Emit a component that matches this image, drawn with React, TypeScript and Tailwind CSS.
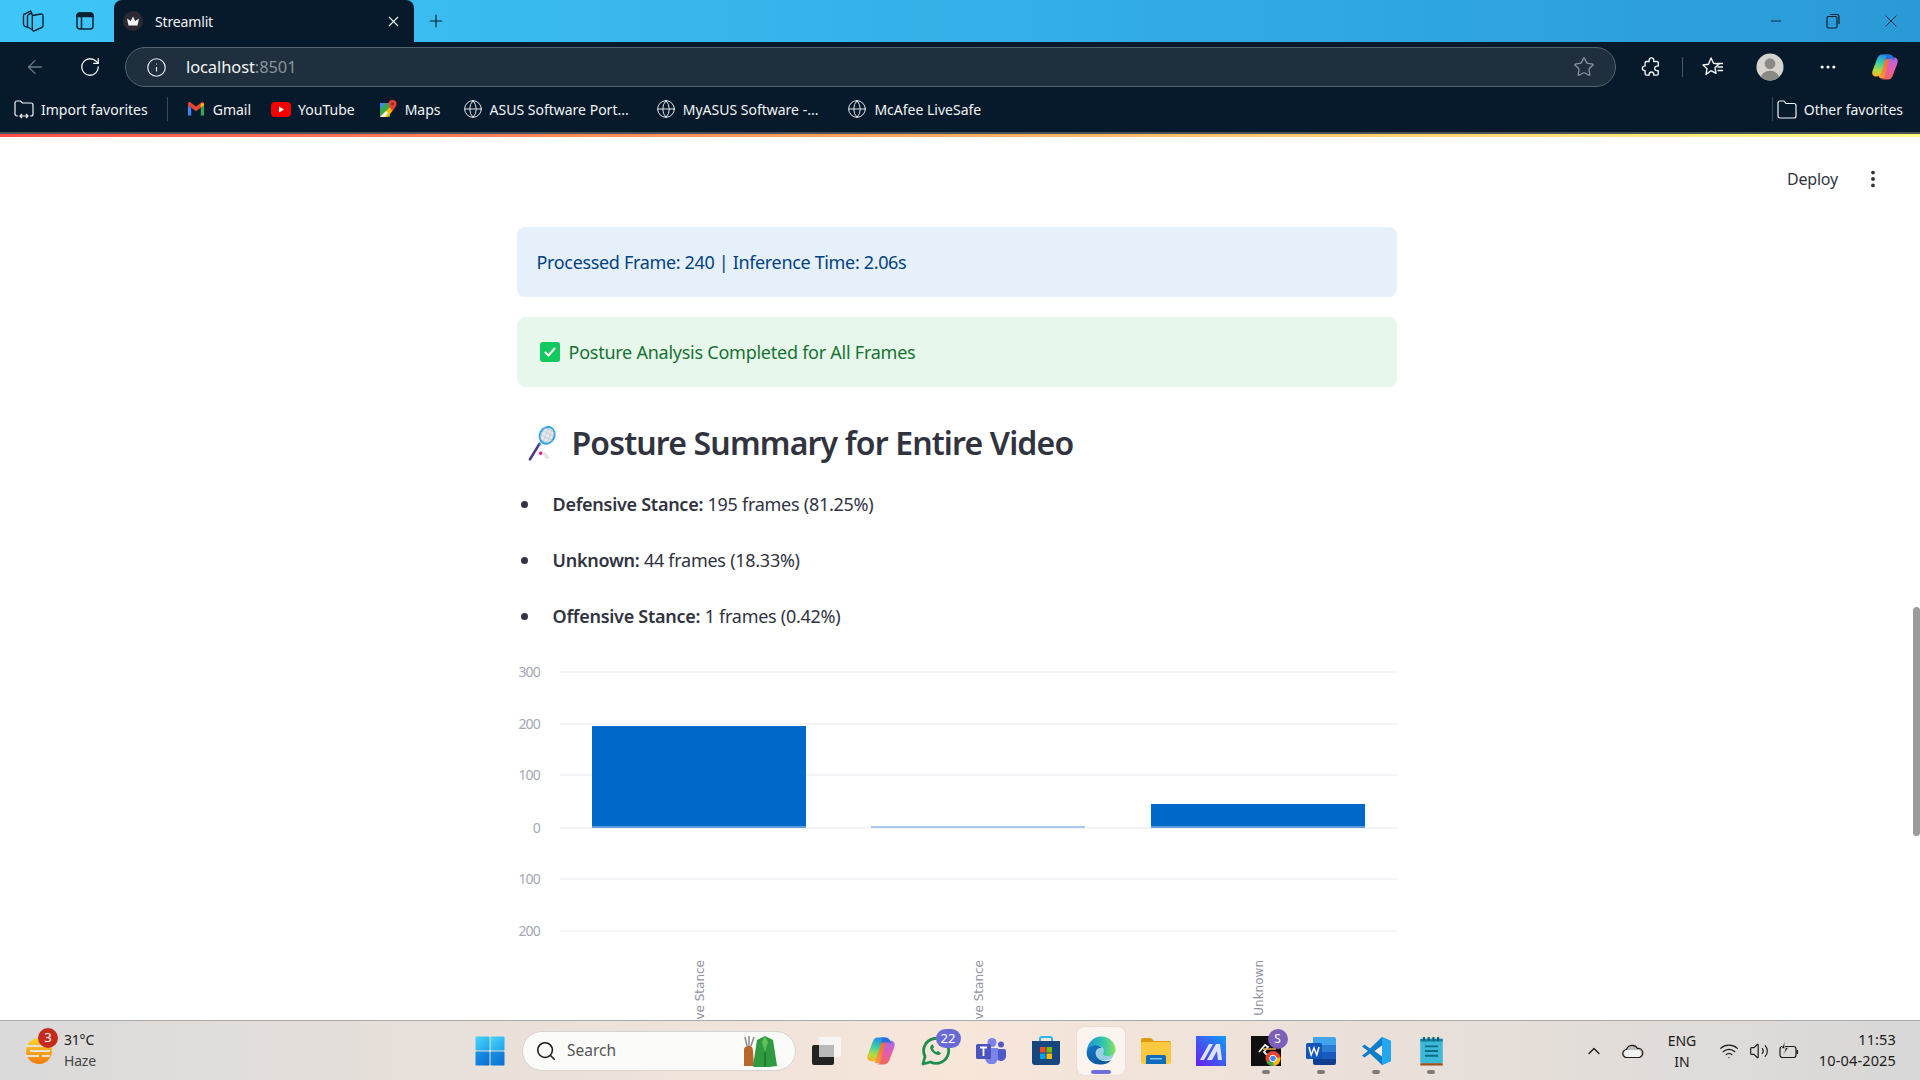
import {
  ArrowLeft,
  ChevronUp,
  Globe,
  Info,
  Minus,
  MoreHorizontal,
  MoreVertical,
  Plus,
  RotateCw,
  Search,
  Star,
  Volume2,
  Wifi,
  X,
} from 'lucide-react'
import type { ReactNode } from 'react'

const SANS = "font-['Noto_Sans',sans-serif]"

function WorkspacesIcon() {
  return (
    <svg width="22" height="22" viewBox="0 0 22 22" fill="none" stroke="#0b2233" strokeWidth="1.4" strokeLinejoin="round">
      <path d="M10.500 5.500 19 4a1.800 1.800 0 0 1 2 1.800v10a1.800 1.800 0 0 1-1.300 1.700l-7.500 3.300a1.300 1.300 0 0 1-1.900-1.200V7.300a1.800 1.800 0 0 1 .7-1.800Z" />
      <path d="M10.500 5.500 9.500 3 6.500 4.500A2 2 0 0 0 5.500 6.300v9.500a2 2 0 0 0 1 1.700l3.500 2" />
      <path d="M9.800 2.800 8.500 1 3 3.800A2 2 0 0 0 1.500 5.800v8.500a2 2 0 0 0 1 1.700l3 1.700" />
    </svg>
  )
}

function VerticalTabsIcon() {
  return (
    <svg width="18" height="18" viewBox="0 0 18 18" fill="none" stroke="#0b2233" strokeWidth="1.500">
      <rect x="1" y="1" width="16" height="16" rx="3" />
      <path d="M1 4.500h16V4a3 3 0 0 0-3-3H4a3 3 0 0 0-3 3Z" fill="#0b2233" />
      <path d="M5.500 4.500V17" />
    </svg>
  )
}

function StreamlitFavicon() {
  return (
    <span className="flex h-5 w-5 items-center justify-center rounded-full bg-[#2b2a33]">
      <svg width="14" height="12" viewBox="0 0 14 12" fill="#f4f4f4">
        <path d="M7 1.500 9.200 6 13 3.500 11.500 10.500H2.500L1 3.500 4.800 6Z" />
      </svg>
    </span>
  )
}

function GmailIcon() {
  return (
    <svg width="18" height="16" viewBox="0 0 18 16" fill="none">
      <path d="M1 4v10.500h3.200V7Z" fill="#4285f4" />
      <path d="M17 4v10.500h-3.200V7Z" fill="#34a853" />
      <path d="M1 4.200 9 10.200l8-6V2.600c0-1.400-1.500-2-2.600-1.200L9 5.500 3.600 1.400C2.500.6 1 1.200 1 2.600Z" fill="#ea4335" />
      <path d="M13.800 2.500 17 2.600v1.600l-3.200 2.600Z" fill="#fbbc04" />
    </svg>
  )
}

function YoutubeIcon() {
  return (
    <svg width="20" height="15" viewBox="0 0 20 15">
      <rect width="20" height="15" rx="4" fill="#f40000" />
      <path d="M8 4.500 13 7.500 8 10.500Z" fill="#fff" />
    </svg>
  )
}

function MapsIcon() {
  return (
    <svg width="18" height="18" viewBox="0 0 18 18">
      <path d="M1 3h10v14H1Z" fill="#35a853" />
      <path d="M1 17 11 7l3 3-5 7Z" fill="#fbbc04" />
      <path d="M1 3h6L1 9Z" fill="#4285f4" />
      <path d="M1 17l6-6 2 2-3 4Z" fill="#f8f3e6" />
      <path d="M13.500 0a4 4 0 0 1 4 4c0 2.600-2.500 4.400-4 7.500C12 8.400 9.500 6.600 9.500 4a4 4 0 0 1 4-4Z" fill="#ea4335" />
      <circle cx="13.500" cy="4" r="1.400" fill="#8f2018" />
    </svg>
  )
}

function FolderImportIcon() {
  return (
    <svg width="20" height="20" viewBox="0 0 20 20" fill="none" stroke="#f2f4f6" strokeWidth="1.200">
      <path d="M4 17H3a2 2 0 0 1-2-2V4a2 2 0 0 1 2-2h3.500l2 2H17a2 2 0 0 1 2 2v9a2 2 0 0 1-2 2h-1" />
      <path d="M6 17h8M8 15l-2 2 2 2M12 15l2 2-2 2" />
    </svg>
  )
}

function FolderIcon() {
  return (
    <svg width="20" height="20" viewBox="0 0 20 20" fill="none" stroke="#f2f4f6" strokeWidth="1.200">
      <path d="M1 4a2 2 0 0 1 2-2h4l2 2.500h8a2 2 0 0 1 2 2V17a2 2 0 0 1-2 2H3a2 2 0 0 1-2-2Z" />
    </svg>
  )
}

function PuzzleIcon() {
  return (
    <svg width="20" height="22" viewBox="0 0 22 24" fill="none" stroke="#f2f4f6" strokeWidth="1.500" strokeLinejoin="round">
      <path d="M9 4.500a2.500 2.500 0 0 1 5 0V6h3.500A1.500 1.500 0 0 1 19 7.500V11h-1.500a2.500 2.500 0 0 0 0 5H19v3.500a1.500 1.500 0 0 1-1.500 1.500H14v-1a2.500 2.500 0 0 0-5 0v1H6a1.500 1.500 0 0 1-1.500-1.500V16H4a2.500 2.500 0 0 1 0-5h.5V7.500A1.500 1.500 0 0 1 6 6h3Z" />
    </svg>
  )
}

function FavoritesIcon() {
  return (
    <svg width="24" height="24" viewBox="0 0 24 24" fill="none" stroke="#f2f4f6" strokeWidth="1.400" strokeLinejoin="round">
      <path d="M10 3 12.500 8.300l5.500.7-4 3.800 1 5.600L10 15.700 5 19.400l1-5.600L2 10l5.500-.8Z" />
      <path d="M16 8.500h6M16.500 12h5.500M16.500 15.500h5.500" />
    </svg>
  )
}

function AvatarIcon() {
  return (
    <svg width="28" height="28" viewBox="0 0 30 30">
      <clipPath id="avatar-clip">
        <circle cx="15" cy="15" r="14.500" />
      </clipPath>
      <circle cx="15" cy="15" r="14.500" fill="#d6d3cf" />
      <g clipPath="url(#avatar-clip)" fill="#8b8985">
        <circle cx="15" cy="11.500" r="5.800" />
        <ellipse cx="15" cy="27" rx="10" ry="8" />
      </g>
    </svg>
  )
}

function CopilotIcon({ id, size = 28 }: { id: string; size?: number }) {
  return (
    <svg width={size} height={size} viewBox="0 0 28 28">
      <defs>
        <linearGradient id={`${id}-a`} x1="0.500" y1="0" x2="0.300" y2="1">
          <stop offset="0" stopColor="#1f8fe8" />
          <stop offset="0.400" stopColor="#3fd0a0" />
          <stop offset="0.750" stopColor="#b5dc3c" />
          <stop offset="1" stopColor="#f8b22a" />
        </linearGradient>
        <linearGradient id={`${id}-b`} x1="0.500" y1="0" x2="0.700" y2="1">
          <stop offset="0" stopColor="#f26a4f" />
          <stop offset="0.450" stopColor="#e55ab5" />
          <stop offset="1" stopColor="#9a6bec" />
        </linearGradient>
        <linearGradient id={`${id}-c`} x1="0" y1="1" x2="1" y2="0">
          <stop offset="0" stopColor="#f9a13a" />
          <stop offset="1" stopColor="#f0503f" />
        </linearGradient>
      </defs>
      <path d="M20 3.500h-6L8 22c-.5 2 .5 3.500 2.500 3.500H17c2 0 3-1 3.700-3L24 13Z" fill={`url(#${id}-c)`} />
      <g transform="rotate(180 14 14)">
        <path d="M11 1.500h7c-2 0-3 1.200-3.800 3.500L10 20c-.8 2.200-2 3.500-4 3.500H5C2 23.500.5 21 1.500 18L6 6C7 3 8.500 1.500 11 1.500Z" fill={`url(#${id}-b)`} />
      </g>
      <path d="M11 1.500h8c-2 0-3.500 1.200-4.300 3.500L10 20c-.8 2.200-2 3.500-4 3.500H5C2 23.500.5 21 1.500 18L6 6C7 3 8.500 1.500 11 1.500Z" fill={`url(#${id}-a)`} />
      <path d="M13 1.500h5c2.500 0 4 1.300 4.800 3.500l1 3c-1-1.500-2.500-2-4-2h-3.500c-2 0-3 1-3.800 3L15 4.500c.5-1.500-.5-3-2-3Z" fill="#2a6fe0" />
    </svg>
  )
}

function RacketEmoji() {
  return (
    <svg width="30" height="36" viewBox="0 0 34 42">
      <path d="M3 40 14 22" stroke="#4b3b8f" strokeWidth="3" strokeLinecap="round" />
      <ellipse cx="23" cy="12" rx="8.500" ry="10" transform="rotate(28 23 12)" fill="#e6e9ee" stroke="#1ea0e6" strokeWidth="2.200" />
      <path d="M15 11 30 19M17 6 32 14M19 2 32 9M14 16 27 22M20 3 14 17M25 3 18 20M29 5 23 21M32 9 27 20" stroke="#b8bcc4" strokeWidth="0.700" />
      <path d="M14 22 16 23" stroke="#1ea0e6" strokeWidth="2.200" />
      <circle cx="15.500" cy="33" r="2" fill="#f0148c" />
      <path d="M17 33 21 32 26 38 22 40Z" fill="#e4e4e8" />
    </svg>
  )
}

function BadgeCheck() {
  return (
    <span className="flex h-5 w-5 items-center justify-center rounded-[3px] bg-[#12c95f]">
      <svg width="14" height="14" viewBox="0 0 14 14" fill="none" stroke="#fff" strokeWidth="2" strokeLinecap="round" strokeLinejoin="round">
        <path d="M2.500 7.500 5.500 10.500 11.500 3.500" />
      </svg>
    </span>
  )
}

function Bookmark({ icon, label, className }: { icon: ReactNode; label: string; className: string }) {
  return (
    <div className={`flex items-center ${className}`}>
      <span className="flex w-5 justify-center">{icon}</span>
      <span className="ml-[7px] whitespace-nowrap text-[14px] text-[#f2f4f6]">{label}</span>
    </div>
  )
}

function BrowserChrome() {
  return (
    <div className={`shrink-0 bg-[#071a2b] ${SANS}`}>
      <div className="flex h-[42px] items-center bg-gradient-to-r from-[#3fc6f8] to-[#2a9ad7]">
        <div className="flex w-[62px] justify-center pl-[4px]">
          <WorkspacesIcon />
        </div>
        <div className="flex w-[44px] justify-center pl-[2px]">
          <VerticalTabsIcon />
        </div>
        <div className="ml-[8px] flex h-[42px] w-[300px] items-center rounded-t-lg bg-[#071a2b] pl-[9px] pr-[12px]">
          <StreamlitFavicon />
          <span className="ml-[12px] flex-1 text-[14px] tracking-[-0.15px] text-[#f2f4f6]">Streamlit</span>
          <X size={17} color="#f2f4f6" strokeWidth={1.6} />
        </div>
        <div className="ml-[12px] flex w-[20px] justify-center">
          <Plus size={24} color="#0b2233" strokeWidth={1.4} />
        </div>
        <div className="ml-auto flex items-center">
          <div className="flex w-[58px] justify-center pl-[2px]">
            <Minus size={16} color="#0b2233" strokeWidth={1.4} />
          </div>
          <div className="flex w-[58px] justify-center">
            <svg width="14" height="16" viewBox="0 0 14 16" fill="none" stroke="#0b2233" strokeWidth="1.200">
              <rect x="1" y="3.500" width="10" height="11.500" rx="1.500" />
              <path d="M4 1.500h7a2 2 0 0 1 2 2V11" />
            </svg>
          </div>
          <div className="flex w-[58px] justify-center pr-[1px]">
            <X size={20} color="#0b2233" strokeWidth={1.100} />
          </div>
        </div>
      </div>

      <div className="flex h-[50px] items-center">
        <div className="flex w-[70px] justify-center">
          <ArrowLeft size={22} color="#6d7a85" strokeWidth={1.400} />
        </div>
        <div className="flex w-[40px] justify-center">
          <RotateCw size={22} color="#f2f4f6" strokeWidth={1.400} />
        </div>
        <div className="ml-[15px] flex h-[40px] w-[1491px] items-center rounded-full border border-[#56636e] bg-[#1f2f3d] pl-[20px] pr-[20px]">
          <Info size={21} color="#f2f4f6" strokeWidth={1.300} />
          <span className="ml-[19px] flex-1 text-[16.500px] tracking-[-0.1px] text-[#f2f4f6]">
            localhost<span className="text-[#8a949c]">:8501</span>
          </span>
          <Star size={22} color="#8a949c" strokeWidth={1.400} />
        </div>
        <div className="ml-[15px] flex w-[40px] justify-center">
          <PuzzleIcon />
        </div>
        <div className="ml-[11px] h-[20px] w-px bg-[#4a5863]" />
        <div className="ml-[18px] flex w-[24px] justify-center">
          <FavoritesIcon />
        </div>
        <div className="ml-[31px]">
          <AvatarIcon />
        </div>
        <div className="ml-[34px]">
          <MoreHorizontal size={20} color="#f2f4f6" strokeWidth={1.800} />
        </div>
        <div className="ml-[33px]">
          <CopilotIcon id="copilot-top" />
        </div>
      </div>

      <div className="flex h-[40px] items-center pb-[6px]">
        <Bookmark className="ml-[14px]" icon={<FolderImportIcon />} label="Import favorites" />
        <div className="ml-[19px] h-[24px] w-px bg-[#3b4a55]" />
        <Bookmark className="ml-[18px]" icon={<GmailIcon />} label="Gmail" />
        <Bookmark className="ml-[20px]" icon={<YoutubeIcon />} label="YouTube" />
        <Bookmark className="ml-[23px]" icon={<MapsIcon />} label="Maps" />
        <Bookmark className="ml-[22px]" icon={<Globe size={20} color="#f2f4f6" strokeWidth={1.100} />} label="ASUS Software Port..." />
        <Bookmark className="ml-[27px]" icon={<Globe size={20} color="#f2f4f6" strokeWidth={1.100} />} label="MyASUS Software -..." />
        <Bookmark className="ml-[29px]" icon={<Globe size={20} color="#f2f4f6" strokeWidth={1.100} />} label="McAfee LiveSafe" />
        <div className="ml-auto h-[24px] w-px bg-[#3b4a55]" />
        <Bookmark className="ml-[1px] mr-[17px] pl-[3px]" icon={<FolderIcon />} label="Other favorites" />
      </div>
      <div className="h-[2px] bg-[#4a525a]" />
      <div className="h-[3px] bg-gradient-to-r from-[#ff4b4b] to-[#fffd80]" />
    </div>
  )
}

const yTicks = [
  { label: '300', y: 672 },
  { label: '200', y: 724 },
  { label: '100', y: 775 },
  { label: '0', y: 828 },
  { label: '100', y: 879 },
  { label: '200', y: 931 },
]

const bars = [
  { x: 592, width: 214, top: 726, fill: '#0068c9', label: 'Defensive Stance' },
  { x: 871, width: 214, top: 826, fill: '#a8c9ef', label: 'Offensive Stance' },
  { x: 1151, width: 214, top: 804, fill: '#0068c9', label: 'Unknown' },
]

function PostureChart() {
  return (
    <svg width="883" height="360" viewBox="517 660 883 360" className="mt-[16px] block shrink-0">
      {yTicks.map((t) => (
        <g key={t.y}>
          <line x1="560" x2="1397" y1={t.y} y2={t.y} stroke="#eef0f4" strokeWidth="1.500" />
          <text
            x="540"
            y={t.y + 5}
            textAnchor="end"
            fontFamily="'Noto Sans', sans-serif"
            fontSize="14"
            letterSpacing="-0.8"
            fill="#a3a8b4"
          >
            {t.label}
          </text>
        </g>
      ))}
      {bars.map((b) => (
        <g key={b.x}>
          <rect x={b.x} y={b.top} width={b.width} height={828 - b.top} fill={b.fill} />
          {b.fill === '#0068c9' && <rect x={b.x} y={826} width={b.width} height={2} fill="#5a9be0" />}
          <text
            transform={`translate(${b.x + 112} 960) rotate(-90)`}
            textAnchor="end"
            fontFamily="'DejaVu Sans', sans-serif"
            fontSize="12"
            fill="#8f93a0"
          >
            {b.label}
          </text>
        </g>
      ))}
    </svg>
  )
}

function ListRow({ name, value }: { name: string; value: string }) {
  return (
    <li className="flex h-[56px] items-center">
      <span className="ml-[4px] h-[7px] w-[7px] rounded-full bg-[#31333f]" />
      <span className="ml-[25px] text-[18px] tracking-[-0.27px] text-[#31333f]">
        <span className="font-semibold">{name}:</span> {value}
      </span>
    </li>
  )
}

function PageContent() {
  return (
    <main className={`relative flex min-h-0 flex-1 flex-col overflow-hidden bg-white pr-[7px] ${SANS}`}>
      <div className="flex h-[84px] shrink-0 items-center justify-end pr-[29px]">
        <span className="text-[16px] tracking-[-0.2px] text-[#31333f]">Deploy</span>
        <MoreVertical size={22} color="#31333f" strokeWidth={2.200} className="ml-[24px]" />
      </div>
      <div className="mx-auto mt-[6px] w-[880px] shrink-0">
        <div className="flex h-[70px] items-center rounded-lg bg-[#e6f0fb] pl-[20px] text-[18px] tracking-[-0.34px] text-[#004280]">
          Processed Frame: 240 | Inference Time: 2.06s
        </div>
        <div className="mt-[20px] flex h-[70px] items-center rounded-lg bg-[#e7f7ec] pl-[23px] text-[18px] tracking-[-0.25px] text-[#177233]">
          <BadgeCheck />
          <span className="ml-[9px]">Posture Analysis Completed for All Frames</span>
        </div>
        <h2 className="mt-[24px] flex h-[64px] items-center text-[32px] font-semibold tracking-[-0.85px] text-[#31333f]">
          <span className="ml-[10px] flex w-[45px]">
            <RacketEmoji />
          </span>
          Posture Summary for Entire Video
        </h2>
        <ul className="mt-[1px]">
          <ListRow name="Defensive Stance" value="195 frames (81.25%)" />
          <ListRow name="Unknown" value="44 frames (18.33%)" />
          <ListRow name="Offensive Stance" value="1 frames (0.42%)" />
        </ul>
        <PostureChart />
      </div>
      <div className="absolute right-0 top-[470px] h-[229px] w-[7px] rounded-full bg-[#9b9b9b]" />
    </main>
  )
}

function WindowsLogo() {
  return (
    <svg width="30" height="30" viewBox="0 0 30 30">
      <defs>
        <linearGradient id="win-top" x1="0" y1="0" x2="1" y2="1">
          <stop offset="0" stopColor="#4fd4fb" />
          <stop offset="1" stopColor="#1aa3ea" />
        </linearGradient>
        <linearGradient id="win-bottom" x1="0" y1="0" x2="1" y2="1">
          <stop offset="0" stopColor="#1b93e6" />
          <stop offset="1" stopColor="#0a6fcf" />
        </linearGradient>
      </defs>
      <rect x="0.500" y="0.500" width="14" height="14" rx="1" fill="url(#win-top)" />
      <rect x="15.500" y="0.500" width="14" height="14" rx="1" fill="url(#win-top)" />
      <rect x="0.500" y="15.500" width="14" height="14" rx="1" fill="url(#win-bottom)" />
      <rect x="15.500" y="15.500" width="14" height="14" rx="1" fill="url(#win-bottom)" />
    </svg>
  )
}

function WeatherIcon() {
  return (
    <svg width="28" height="34" viewBox="0 0 28 34">
      <defs>
        <linearGradient id="sun" x1="0" y1="0" x2="0" y2="1">
          <stop offset="0" stopColor="#fbd531" />
          <stop offset="1" stopColor="#f07a0a" />
        </linearGradient>
      </defs>
      <circle cx="14" cy="17" r="13" fill="url(#sun)" />
      <path d="M1 12h18M5 17h20M0 22h14M17 22h8" stroke="#e8e2d4" strokeWidth="2" />
    </svg>
  )
}

function JacketDecor() {
  return (
    <svg width="38" height="34" viewBox="0 0 38 34">
      <path d="M3 16c0-3 2-4 5-4s4 2 4 5l1 15H3Z" fill="#b7672c" />
      <path d="M6 12 4 3M8 12 8 2M10 12l3-9" stroke="#8b8b8b" strokeWidth="1.500" />
      <path d="M16 6l8-4 8 4 4 26-8 1H13l-1-1Z" fill="#2f9a3f" />
      <path d="M24 2l-3 6 3 10 3-10Z" fill="#5fc15b" />
      <path d="M24 18v15" stroke="#1a6e2b" strokeWidth="1.200" />
    </svg>
  )
}

function TaskIcon() {
  return (
    <svg width="29" height="28" viewBox="0 0 29 28">
      <rect x="0" y="8" width="22" height="20" rx="2" fill="#232323" />
      <rect x="7" y="0" width="22" height="20" rx="1.500" fill="#f7f5f3" />
      <rect x="7" y="8" width="15" height="12" fill="#b9b9b9" />
    </svg>
  )
}

function WhatsappIcon() {
  return (
    <svg width="31" height="30" viewBox="0 0 31 30" fill="none">
      <path d="M2 28 4 20.500A12.500 12.500 0 1 1 9.500 26Z" stroke="#1f8f4f" strokeWidth="2.800" strokeLinejoin="round" />
      <path d="M10 9.500c-1.500 1.500-1 4 1.500 6.500s5.500 4 7.500 2.500l1-1.500-3-2-1.500 1c-1.500-.5-3-2-3.500-3.500l1-1.500-1.500-3Z" fill="#1f8f4f" />
    </svg>
  )
}

function TeamsIcon() {
  return (
    <svg width="30" height="26" viewBox="0 0 30 26">
      <circle cx="16" cy="4.500" r="4.500" fill="#7b83eb" />
      <circle cx="25" cy="6.500" r="3" fill="#5059c9" />
      <path d="M20 11h8a2 2 0 0 1 2 2v5a5 5 0 0 1-9 3Z" fill="#5059c9" />
      <path d="M9 10h13v10a6 6 0 0 1-13 0Z" fill="#7b83eb" />
      <rect x="0" y="6" width="15" height="15" rx="1.500" fill="#4b53bc" />
      <path d="M4 9.500h7M7.500 9.500V18" stroke="#fff" strokeWidth="1.800" />
    </svg>
  )
}

function StoreIcon() {
  return (
    <svg width="30" height="30" viewBox="0 0 30 30" fill="none">
      <path d="M9 6V3a2 2 0 0 1 2-2h8a2 2 0 0 1 2 2v3" stroke="#29b6e8" strokeWidth="2" />
      <path d="M1 5h28v21a3 3 0 0 1-3 3H4a3 3 0 0 1-3-3Z" fill="#17457e" />
      <rect x="9" y="11" width="5.500" height="5.500" fill="#f25022" />
      <rect x="15.500" y="11" width="5.500" height="5.500" fill="#7fba00" />
      <rect x="9" y="17.500" width="5.500" height="5.500" fill="#00a4ef" />
      <rect x="15.500" y="17.500" width="5.500" height="5.500" fill="#ffb900" />
    </svg>
  )
}

function EdgeIcon() {
  return (
    <svg width="30" height="30" viewBox="0 0 31 31">
      <defs>
        <linearGradient id="edge-a" x1="0" y1="0.500" x2="1" y2="0.500">
          <stop offset="0" stopColor="#1a8fdc" />
          <stop offset="0.550" stopColor="#2fc4b2" />
          <stop offset="1" stopColor="#86e35f" />
        </linearGradient>
        <linearGradient id="edge-b" x1="0" y1="0" x2="1" y2="1">
          <stop offset="0" stopColor="#1578c6" />
          <stop offset="1" stopColor="#0b4f94" />
        </linearGradient>
      </defs>
      <path d="M15.500.5C24 .5 30.500 7 30.500 14c0 4-3 7-8 7-3 0-5-1-5-2.500 0-.8 1-1.200 1-3 0-3-3-5.500-7-5.500C6 10 2.500 13 .7 17 1 8 7 .5 15.500.5Z" fill="url(#edge-a)" />
      <path d="M.7 17C1.500 11.500 6 9.500 10 9.500c3 0 5 1 6.500 3-4-.5-6.500 2-6.500 5 0 5 5 9 11 8.500 2 0 4-.5 5.500-1.500-3 3.500-7 5-11 5C7 30 .5 24 .7 17Z" fill="url(#edge-b)" />
      <path d="M16.500 12.500c2 1 2 2.500 2 3 0 1.800-1 2.200-1 3 0 1.500 2 2.500 5 2.500 2.500 0 5-1 6.500-3-1 3-2 4.500-3.500 6-2 1-4 1.500-6 1.500-6 .5-9.500-3.500-9.500-8 0-3 3-5.500 6.500-5Z" fill="#1e9fd8" opacity="0.450" />
    </svg>
  )
}

function FolderAppIcon() {
  return (
    <svg width="30" height="26" viewBox="0 0 30 26">
      <path d="M0 2a2 2 0 0 1 2-2h8l3 3h15a2 2 0 0 1 2 2v4H0Z" fill="#dd9a0c" />
      <rect x="0" y="4" width="30" height="22" rx="2" fill="#fbc93f" />
      <path d="M5 19a2 2 0 0 1 2-2h16a2 2 0 0 1 2 2v7H5Z" fill="#0f6cbd" />
      <rect x="9" y="20" width="12" height="1.500" fill="#7fc4f0" />
    </svg>
  )
}

function MathpixIcon() {
  return (
    <svg width="30" height="30" viewBox="0 0 30 30">
      <defs>
        <linearGradient id="mp" x1="0" y1="1" x2="1" y2="0">
          <stop offset="0" stopColor="#6a1df0" />
          <stop offset="1" stopColor="#109df5" />
        </linearGradient>
      </defs>
      <rect width="30" height="30" fill="url(#mp)" />
      <path d="M4 24 13 8h4L8 24ZM11 24l9-16h4l2 16h-4l-1-9-5 9Z" fill="#dfe3fb" />
    </svg>
  )
}

function ChromeShortcutIcon() {
  return (
    <svg width="30" height="30" viewBox="0 0 30 30">
      <rect width="30" height="30" fill="#101010" />
      <path d="M8 16 14 9l3 2-4 5 4 4" stroke="#f0f0f0" strokeWidth="1.800" fill="none" />
      <path d="M12 13h13" stroke="#d9a042" strokeWidth="1.600" />
      <circle cx="22" cy="22.500" r="7.500" fill="#ea4335" />
      <path d="M22 22.500 15.500 26a7.500 7.500 0 0 0 7 4Z" fill="#34a853" />
      <path d="M22 22.500l7.400-1a7.500 7.500 0 0 1-6.900 8.500Z" fill="#fbbc04" />
      <circle cx="22" cy="22.500" r="3.300" fill="#4285f4" stroke="#fff" strokeWidth="1" />
    </svg>
  )
}

function WordIcon() {
  return (
    <svg width="30" height="30" viewBox="0 0 30 30">
      <path d="M7 1h21a2 2 0 0 1 2 2v6H7Z" fill="#41a5ee" />
      <path d="M7 9h23v7H7Z" fill="#2b7cd3" />
      <path d="M7 16h23v7H7Z" fill="#185abd" />
      <path d="M7 23h23v4a2 2 0 0 1-2 2H9a2 2 0 0 1-2-2Z" fill="#103f91" />
      <rect x="0" y="7" width="16" height="16" rx="1.500" fill="#1456b8" />
      <path d="M3 11l2.200 8 2.800-7 2.800 7 2.200-8" stroke="#fff" strokeWidth="1.500" fill="none" />
    </svg>
  )
}

function VscodeIcon() {
  return (
    <svg width="30" height="30" viewBox="0 0 30 30">
      <path d="M21 1 30 5v20l-9 4-12-11.500-5.500 4L1 19.500 7 15 1 10.500 3.500 8.500l5.500 4Z" fill="#0e7dc8" />
      <path d="M21 1 30 5v20l-9 4Z" fill="#22a7f0" />
      <path d="M21 9.500 13.500 15l7.500 5.500Z" fill="#f8ece3" />
    </svg>
  )
}

function NotepadIcon() {
  return (
    <svg width="23" height="30" viewBox="0 0 24 32">
      <rect x="0" y="3" width="24" height="26" rx="1.500" fill="#3cb9d8" />
      <rect x="0" y="3" width="24" height="3" fill="#1583a3" />
      <path d="M4 1v4M9 1v4M14 1v4M19 1v4" stroke="#0e5f78" strokeWidth="2.200" />
      <path d="M5 11h14M5 16h14M5 21h14" stroke="#0d6d88" strokeWidth="2" />
      <rect x="0" y="29" width="24" height="2.500" fill="#9a5320" />
    </svg>
  )
}

function TrayBattery() {
  return (
    <svg width="22" height="22" viewBox="0 0 22 22" fill="none" stroke="#1a1a1a" strokeWidth="1.200">
      <rect x="2" y="6.500" width="16" height="11" rx="2.500" />
      <rect x="18.500" y="10" width="1.500" height="4" fill="#1a1a1a" stroke="none" />
      <path d="M7 1 3.500 8.500h4L5 15l5.500-7.500h-4Z" fill="#1a1a1a" stroke="#d9d9d9" strokeWidth="0.700" />
    </svg>
  )
}

function TrayCloud() {
  return (
    <svg width="22" height="14" viewBox="0 0 22 14">
      <path d="M5 13.500a4 4 0 0 1-.5-8A6 6 0 0 1 15.500 4.500 4.500 4.500 0 0 1 17 13.500Z" fill="#bcbcbc" stroke="#1a1a1a" strokeWidth="1.200" />
      <path d="M5 13a3.600 3.600 0 0 1-.2-7H17a4 4 0 0 1 0 7Z" fill="#f2f2f2" />
    </svg>
  )
}

function TaskSlot({ children, badge, runDot }: { children: ReactNode; badge?: ReactNode; runDot?: boolean }) {
  return (
    <div className="relative flex h-[59px] w-[55px] shrink-0 items-center justify-center">
      {children}
      {badge}
      {runDot && <span className="absolute bottom-[6px] left-1/2 h-[4px] w-[8px] -translate-x-1/2 rounded-full bg-[#7e7a76]" />}
    </div>
  )
}

function Taskbar() {
  return (
    <footer className={`flex h-[60px] shrink-0 items-center border-t border-[#a9a9a9] bg-gradient-to-r from-[#dadada] via-[#f7e6da] to-[#d8d8d8] text-[#1a1a1a] ${SANS}`}>
      <div className="relative flex w-[462px] shrink-0 items-center pl-[25px]">
        <WeatherIcon />
        <span className="absolute left-[38px] top-[-2px] flex h-[20px] w-[20px] items-center justify-center rounded-full bg-[#c42b1c] text-[13px] text-white">
          3
        </span>
        <div className="ml-[11px] -translate-y-[1px] leading-[21px]">
          <div className="text-[14px] tracking-[-0.2px]">31°C</div>
          <div className="text-[14px] tracking-[-0.2px] text-[#444]">Haze</div>
        </div>
      </div>
      <div className="flex w-[55px] shrink-0 justify-center">
        <WindowsLogo />
      </div>
      <div className="ml-[5px] flex h-[40px] w-[274px] shrink-0 items-center rounded-full border border-[#d6d3d0] bg-[#fafaf8] pl-[12px] pr-[16px]">
        <Search size={22} color="#1a1a1a" strokeWidth={1.700} />
        <span className="ml-[10px] flex-1 text-[15.500px] text-[#555]">Search</span>
        <JacketDecor />
      </div>
      <div className="w-[2.500px] shrink-0" />
      <TaskSlot>
        <TaskIcon />
      </TaskSlot>
      <TaskSlot>
        <CopilotIcon id="copilot-task" size={30} />
      </TaskSlot>
      <TaskSlot
        badge={
          <span className="absolute left-[27px] top-[8px] flex h-[19px] w-[25px] items-center justify-center rounded-full bg-[#6a6ad6] text-[13px] text-white">
            22
          </span>
        }
      >
        <WhatsappIcon />
      </TaskSlot>
      <TaskSlot>
        <TeamsIcon />
      </TaskSlot>
      <TaskSlot>
        <StoreIcon />
      </TaskSlot>
      <div className="relative flex h-[59px] w-[55px] shrink-0 items-center justify-center">
        <div className="flex h-[48px] w-[48px] items-center justify-center rounded-md bg-[#fbf3ee] shadow-[0_0_1px_#b8b0aa]">
          <EdgeIcon />
        </div>
        <span className="absolute bottom-[6px] left-1/2 h-[4px] w-[20px] -translate-x-1/2 rounded-full bg-[#6e6fd8]" />
      </div>
      <TaskSlot>
        <FolderAppIcon />
      </TaskSlot>
      <TaskSlot>
        <MathpixIcon />
      </TaskSlot>
      <TaskSlot
        runDot
        badge={
          <span className="absolute left-[29px] top-[8px] flex h-[20px] w-[20px] items-center justify-center rounded-full bg-[#7b5fb8] text-[12px] text-white">
            S
          </span>
        }
      >
        <ChromeShortcutIcon />
      </TaskSlot>
      <TaskSlot runDot>
        <WordIcon />
      </TaskSlot>
      <TaskSlot runDot>
        <VscodeIcon />
      </TaskSlot>
      <TaskSlot runDot>
        <NotepadIcon />
      </TaskSlot>

      <div className="ml-auto flex items-center">
        <div className="flex w-[40px] justify-center">
          <ChevronUp size={20} color="#1a1a1a" strokeWidth={1.600} />
        </div>
        <div className="flex w-[38px] justify-center">
          <TrayCloud />
        </div>
        <div className="w-[60px] text-center text-[14px] leading-[21px]">
          <div>ENG</div>
          <div>IN</div>
        </div>
        <div className="ml-[2px] flex w-[30px] justify-center">
          <Wifi size={20} color="#1a1a1a" strokeWidth={1.400} />
        </div>
        <div className="flex w-[30px] justify-center">
          <Volume2 size={20} color="#1a1a1a" strokeWidth={1.400} />
        </div>
        <div className="flex w-[30px] justify-center">
          <TrayBattery />
        </div>
        <div className="ml-[12px] mr-[24px] w-[80px] -translate-y-[1px] text-right text-[14.500px] leading-[21px] tracking-[0.15px]">
          <div>11:53</div>
          <div>10-04-2025</div>
        </div>
      </div>
    </footer>
  )
}

export default function App() {
  return (
    <div className="flex h-screen w-full flex-col overflow-hidden">
      <BrowserChrome />
      <PageContent />
      <Taskbar />
    </div>
  )
}
